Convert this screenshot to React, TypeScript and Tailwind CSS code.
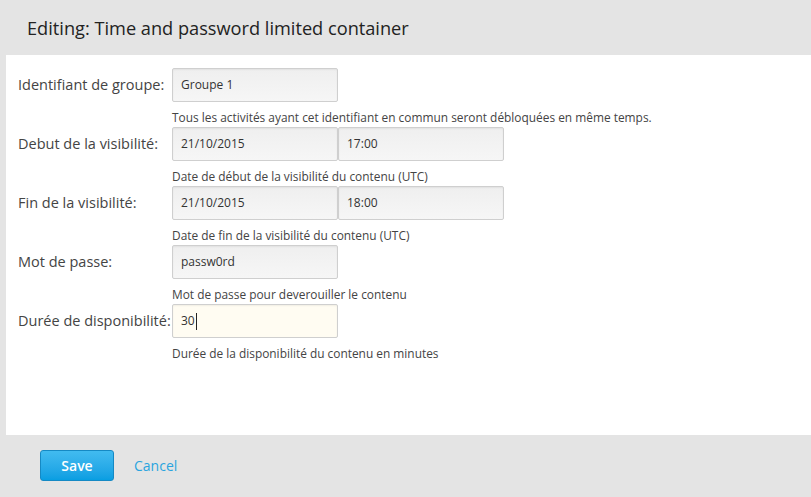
import React from "react";

const font = { fontFamily: '"Open Sans", "Noto Sans", sans-serif' };

function Input({ value, focused }: { value: string; focused?: boolean }) {
  return (
    <div
      className={
        "w-[166px] h-[34px] border border-[#cfcfcf] rounded-[2px] flex items-center pl-[8px] text-[12px] text-[#333] shadow-[inset_0_1px_2px_rgba(0,0,0,0.06)] " +
        (focused ? "bg-[#fffcf2]" : "bg-gradient-to-b from-[#efefef] to-[#f6f6f6]")
      }
    >
      <span>{value}</span>
      {focused && <span className="w-px h-[17px] bg-[#222] ml-px" />}
    </div>
  );
}

function Row({
  label,
  values,
  help,
  focused,
}: {
  label: string;
  values: string[];
  help: string;
  focused?: boolean;
}) {
  return (
    <div className="flex h-[59px]">
      <div className="w-[154px] h-[34px] flex items-center text-[14.5px] text-[#444] whitespace-nowrap">
        {label}
      </div>
      <div className="flex flex-col">
        <div className="flex">
          {values.map((v, i) => (
            <Input key={i} value={v} focused={focused} />
          ))}
        </div>
        <div className="mt-[6px] text-[11.9px] leading-[19px] text-[#444] whitespace-nowrap">{help}</div>
      </div>
    </div>
  );
}

export default function App() {
  return (
    <div className="w-[811px] h-[497px] bg-[#e4e4e4] flex flex-col overflow-hidden" style={font}>
      <div className="h-[55px] flex items-center pl-[27px] pt-[2px] text-[18.2px] text-[#222]">
        Editing: Time and password limited container
      </div>
      <div className="ml-[6px] h-[380px] bg-white pl-[12px] pt-[13px]">
        <Row
          label="Identifiant de groupe:"
          values={["Groupe 1"]}
          help="Tous les activités ayant cet identifiant en commun seront débloquées en même temps."
        />
        <Row
          label="Debut de la visibilité:"
          values={["21/10/2015", "17:00"]}
          help="Date de début de la visibilité du contenu (UTC)"
        />
        <Row
          label="Fin de la visibilité:"
          values={["21/10/2015", "18:00"]}
          help="Date de fin de la visibilité du contenu (UTC)"
        />
        <Row label="Mot de passe:" values={["passw0rd"]} help="Mot de passe pour deverouiller le contenu" />
        <Row
          label="Durée de disponibilité:"
          values={["30"]}
          help="Durée de la disponibilité du contenu en minutes"
          focused
        />
      </div>
      <div className="flex items-center pl-[40px] pt-[15px] gap-[20px]">
        <button className="w-[74px] h-[31px] rounded-[3px] border border-[#1589c4] bg-gradient-to-b from-[#41bbf0] to-[#079ee2] text-white text-[14px] font-semibold">
          Save
        </button>
        <span className="text-[14px] text-[#2aa4df]">Cancel</span>
      </div>
    </div>
  );
}
